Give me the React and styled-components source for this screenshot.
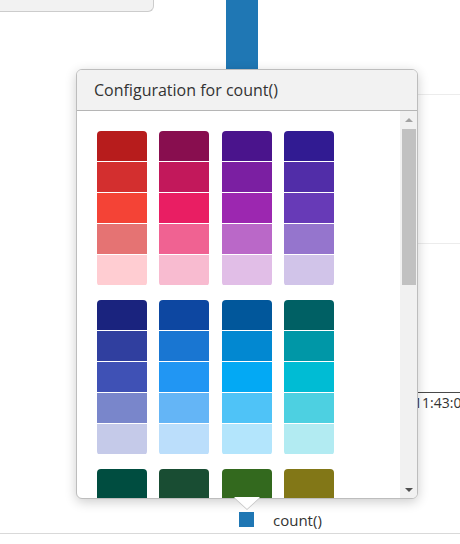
import React from "react";
import styled, { createGlobalStyle } from "styled-components";

const GlobalStyle = createGlobalStyle`
  html, body {
    margin: 0;
    padding: 0;
    background: #ffffff;
    font-family: "Open Sans", "Noto Sans", sans-serif;
    color: #333333;
  }
  * { box-sizing: border-box; }
`;

// Material palette, one list of five shades per hue (dark to light).
const PALETTE = [
  ["#B71C1C", "#D32F2F", "#F44336", "#E57373", "#FFCDD2"],
  ["#880E4F", "#C2185B", "#E91E63", "#F06292", "#F8BBD0"],
  ["#4A148C", "#7B1FA2", "#9C27B0", "#BA68C8", "#E1BEE7"],
  ["#311B92", "#512DA8", "#673AB7", "#9575CD", "#D1C4E9"],
  ["#1A237E", "#303F9F", "#3F51B5", "#7986CB", "#C5CAE9"],
  ["#0D47A1", "#1976D2", "#2196F3", "#64B5F6", "#BBDEFB"],
  ["#01579B", "#0288D1", "#03A9F4", "#4FC3F7", "#B3E5FC"],
  ["#006064", "#0097A7", "#00BCD4", "#4DD0E1", "#B2EBF2"],
  ["#004D40", "#00796B", "#009688", "#4DB6AC", "#B2DFDB"],
  ["#194D33", "#388E3C", "#4CAF50", "#81C784", "#C8E6C9"],
  ["#33691E", "#689F38", "#8BC34A", "#AED581", "#DCEDC8"],
  ["#827717", "#AFB42B", "#CDDC39", "#DCE775", "#F0F4C3"],
  ["#F57F17", "#FBC02D", "#FFEB3B", "#FFF176", "#FFF9C4"],
  ["#FF6F00", "#FFA000", "#FFC107", "#FFD54F", "#FFECB3"],
  ["#E65100", "#F57C00", "#FF9800", "#FFB74D", "#FFE0B2"],
  ["#BF360C", "#E64A19", "#FF5722", "#FF8A65", "#FFCCBC"],
  ["#3E2723", "#5D4037", "#795548", "#A1887F", "#D7CCC8"],
  ["#263238", "#455A64", "#607D8B", "#90A4AE", "#CFD8DC"],
  ["#000000", "#525252", "#969696", "#D9D9D9", "#FFFFFF"],
];

const Page = styled.div`
  position: relative;
  width: 460px;
  height: 544px;
  overflow: hidden;
  display: grid;
  grid-template-columns: 460px;
  grid-template-rows: 12px 486px 36px 10px;
`;

const TopCard = styled.div`
  grid-area: 1 / 1 / 2 / 2;
  z-index: 1;
  width: 154px;
  height: 12px;
  background: #f2f2f2;
  border-right: 1px solid #cccccc;
  border-bottom: 1px solid #cccccc;
  border-bottom-right-radius: 6px;
`;

const Chart = styled.svg`
  grid-area: 1 / 1 / 3 / 2;
  display: block;
  width: 460px;
  height: 498px;
`;

const AxisLabel = styled.text`
  font-family: "Open Sans", "Noto Sans", sans-serif;
  font-size: 14px;
  fill: #333333;
`;

const Legend = styled.div`
  grid-area: 3 / 1 / 4 / 2;
  display: flex;
  align-items: center;
  gap: 19px;
  padding: 8px 0 0 239px;
  border-bottom: 1px solid #d9d9d9;
`;

const LegendKey = styled.span`
  width: 15px;
  height: 15px;
  background: ${(p) => p.$color};
`;

const LegendLabel = styled.span`
  font-size: 15px;
  line-height: 18px;
  color: #333333;
`;

const Popover = styled.div`
  position: absolute;
  left: 76px;
  top: 69px;
  z-index: 2;
  width: 342px;
  height: 430px;
  display: flex;
  flex-direction: column;
  background: #ffffff;
  border: 1px solid #bdbdbd;
  border-radius: 6px;
  box-shadow: 0 3px 12px rgba(0, 0, 0, 0.2);
`;

const PopoverArrow = styled.span`
  position: absolute;
  left: 50%;
  top: 100%;
  width: 0;
  height: 0;

  &::before,
  &::after {
    content: "";
    position: absolute;
    left: -13px;
    top: 0;
    width: 0;
    height: 0;
    border-left: 13px solid transparent;
    border-right: 13px solid transparent;
  }
  &::before {
    border-top: 12px solid #c4c4c4;
  }
  &::after {
    top: -1px;
    border-top: 12px solid #ffffff;
  }
`;

const Header = styled.div`
  height: 41px;
  flex-shrink: 0;
  display: flex;
  align-items: center;
  padding: 0 17px;
  background: #f2f2f2;
  border-bottom: 1px solid #b5b5b5;
  border-radius: 5px 5px 0 0;
  font-size: 16px;
  color: #333333;
`;

const Body = styled.div`
  flex: 1;
  min-height: 0;
  display: flex;
  overflow: hidden;
  border-radius: 0 0 5px 5px;
`;

const SwatchList = styled.div`
  flex: 1;
  min-width: 0;
  overflow: hidden;
  padding: 20px 0 0 20px;
  display: grid;
  grid-template-columns: repeat(4, 50px);
  grid-auto-rows: 155px;
  column-gap: 12.4px;
  row-gap: 14px;
  align-content: start;
`;

const SwatchGroup = styled.div`
  display: flex;
  flex-direction: column;
  gap: 1px;
  border-radius: 4px;
  overflow: hidden;
`;

const Swatch = styled.div`
  flex: 0 0 30px;
  height: 30px;
  background: ${(p) => p.$color};
  cursor: pointer;
`;

const ScrollTrack = styled.div`
  width: 17px;
  flex-shrink: 0;
  display: flex;
  flex-direction: column;
  background: #f1f1f1;
`;

const ScrollButton = styled.div`
  height: 17px;
  flex-shrink: 0;
  display: flex;
  align-items: center;
  justify-content: center;
  padding-left: 1px;
`;

const Triangle = styled.span`
  width: 0;
  height: 0;
  border-left: 4px solid transparent;
  border-right: 4px solid transparent;
  ${(p) =>
    p.$up
      ? `border-bottom: 4px solid ${p.$color};`
      : `border-top: 4px solid ${p.$color};`}
`;

const Thumb = styled.div`
  height: 156px;
  flex-shrink: 0;
  margin: 1px 1px 0 2px;
  background: #c1c1c1;
`;

const TrackSpace = styled.div`
  flex: 1;
`;

export default function App() {
  return (
    <>
      <GlobalStyle />
      <Page>
        <TopCard />
        <Chart viewBox="0 0 460 498">
          <line x1="150" x2="460" y1="94.5" y2="94.5" stroke="#ececec" />
          <line x1="150" x2="460" y1="243.5" y2="243.5" stroke="#ececec" />
          <rect x="226" y="0" width="32" height="392" fill="#1f77b4" />
          <line x1="150" x2="460" y1="392.5" y2="392.5" stroke="#4a4a4a" />
          <AxisLabel x="414" y="408">11:43:00</AxisLabel>
        </Chart>
        <Legend>
          <LegendKey $color="#1f77b4" />
          <LegendLabel>count()</LegendLabel>
        </Legend>

        <Popover>
          <Header>Configuration for count()</Header>
          <Body>
            <SwatchList>
              {PALETTE.map((shades) => (
                <SwatchGroup key={shades[0]}>
                  {shades.map((c) => (
                    <Swatch key={c} $color={c} title={c} />
                  ))}
                </SwatchGroup>
              ))}
            </SwatchList>
            <ScrollTrack>
              <ScrollButton>
                <Triangle $up $color="#a3a3a3" />
              </ScrollButton>
              <Thumb />
              <TrackSpace />
              <ScrollButton>
                <Triangle $color="#505050" />
              </ScrollButton>
            </ScrollTrack>
          </Body>
          <PopoverArrow />
        </Popover>
      </Page>
    </>
  );
}
